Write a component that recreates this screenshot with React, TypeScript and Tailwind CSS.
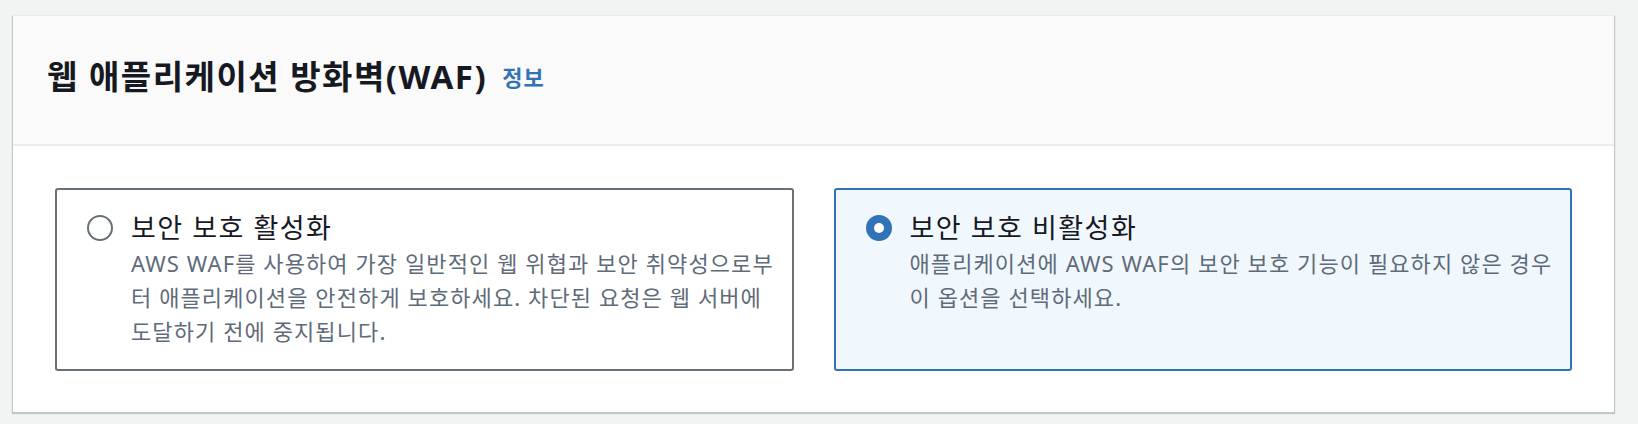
import { useState } from 'react';

type Option = {
  id: string;
  label: string;
  lines: string[];
};

const options: Option[] = [
  {
    id: 'enable',
    label: '보안 보호 활성화',
    lines: [
      'AWS WAF를 사용하여 가장 일반적인 웹 위협과 보안 취약성으로부',
      '터 애플리케이션을 안전하게 보호하세요. 차단된 요청은 웹 서버에',
      '도달하기 전에 중지됩니다.',
    ],
  },
  {
    id: 'disable',
    label: '보안 보호 비활성화',
    lines: [
      '애플리케이션에 AWS WAF의 보안 보호 기능이 필요하지 않은 경우',
      '이 옵션을 선택하세요.',
    ],
  },
];

const fontStack = "font-['Noto_Sans','Noto_Sans_CJK_KR',sans-serif]";

function RadioDot({ checked }: { checked: boolean }) {
  if (checked) {
    return (
      <span className="mt-[2px] flex h-[26px] w-[26px] shrink-0 items-center justify-center rounded-full bg-[#3173b5]">
        <span className="h-[10px] w-[10px] rounded-full bg-white" />
      </span>
    );
  }
  return (
    <span className="mt-[2px] h-[26px] w-[26px] shrink-0 rounded-full border-2 border-[#687078] bg-white" />
  );
}

export default function App() {
  const [selected, setSelected] = useState('disable');

  return (
    <div className={`h-[424px] w-[1638px] bg-[#f2f3f3] pl-[13px] pt-[16px] ${fontStack}`}>
      <div className="w-[1601px] bg-white shadow-[0_1px_1px_1px_rgba(0,28,36,0.2)]">
        <div className="flex h-[130px] items-center gap-[15px] border-b-2 border-[#eaeded] bg-[#fafafa] pb-[8px] pl-[34px]">
          <h2 className="text-[33px] font-bold leading-none tracking-[1.5px] text-[#16191f]">
            웹 애플리케이션 방화벽(WAF)
          </h2>
          <a href="#" className="pt-[2px] text-[22px] font-bold tracking-[1px] text-[#3173b5]">
            정보
          </a>
        </div>

        <div className="grid grid-cols-2 gap-[40px] px-[42px] pb-[41px] pt-[42px]">
          {options.map((option) => {
            const checked = selected === option.id;
            return (
              <button
                key={option.id}
                type="button"
                onClick={() => setSelected(option.id)}
                className={`flex h-[183px] gap-[18px] rounded-[3px] border-2 pl-[30px] pr-[2px] pt-[23px] text-left ${
                  checked ? 'border-[#3173b5] bg-[#f1f8fd]' : 'border-[#687078] bg-white'
                }`}
              >
                <RadioDot checked={checked} />
                <div className="flex flex-col">
                  <span className="text-[27px] leading-[30px] tracking-[1.5px] text-[#16191f]">
                    {option.label}
                  </span>
                  <div className="mt-[3px] text-[22px] leading-[34px] tracking-[1.1px] text-[#5f6b7a]">
                    {option.lines.map((line) => (
                      <div key={line} className="whitespace-nowrap">
                        {line}
                      </div>
                    ))}
                  </div>
                </div>
              </button>
            );
          })}
        </div>
      </div>
    </div>
  );
}
